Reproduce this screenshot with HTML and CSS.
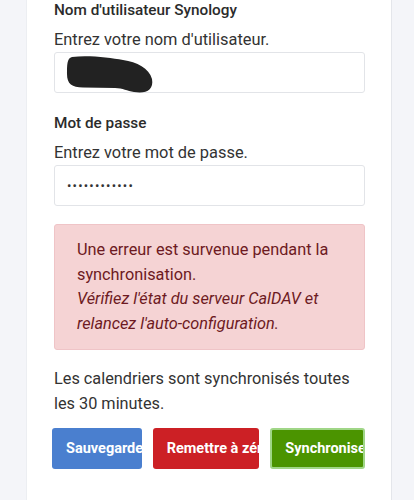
FILE: index.html
```html
<!DOCTYPE html>
<html lang="fr">
<head>
<meta charset="utf-8">
<link rel="stylesheet" href="styles.css">
</head>
<body>
<div class="page">
  <div class="card">
    <div class="field">
      <div class="label">Nom d'utilisateur Synology</div>
      <div class="hint">Entrez votre nom d'utilisateur.</div>
      <div class="input">
        <svg class="scribble" width="100" height="41" viewBox="0 0 100 41">
          <path d="M17 4 C 35 2, 55 5, 68 7 C 82 9, 94 15, 97 26 C 99 37, 91 41, 79 39 C 72 38, 68 35, 60 35 L 28 34.5 C 17 34.5, 12 31, 12 21 C 12 12, 12 5, 17 4 Z" fill="#222"/>
        </svg>
      </div>
    </div>
    <div class="field">
      <div class="label">Mot de passe</div>
      <div class="hint">Entrez votre mot de passe.</div>
      <div class="input"><span class="dots">••••••••••••</span></div>
    </div>
    <div class="alert">
      Une erreur est survenue pendant la synchronisation.<br>
      <em>Vérifiez l'état du serveur CalDAV et relancez l'auto-configuration.</em>
    </div>
    <p class="note">Les calendriers sont synchronisés toutes les 30 minutes.</p>
    <div class="buttons">
      <div class="btn btn-blue">Sauvegarder</div>
      <div class="btn btn-red">Remettre à zéro</div>
      <div class="btn btn-green">Synchroniser</div>
    </div>
  </div>
</div>
</body>
</html>
```
FILE: styles.css
```css
html, body {
  margin: 0;
  padding: 0;
  background: #f4f5f9;
  font-family: Roboto, "Liberation Sans", sans-serif;
  color: #2a2a2a;
}
.page {
  padding: 0 22px 0 26px;
  height: 500px;
  overflow: hidden;
}
.card {
  background: #fff;
  border-left: 1px solid #eceef2;
  border-right: 1px solid #e4e6eb;
  padding: 0 26px 0 27px;
  height: 500px;
  box-sizing: border-box;
}
.field {
  display: flex;
  flex-direction: column;
}
.label {
  font-weight: 500;
  font-size: 15.3px;
  line-height: 20px;
  color: #2b2b2b;
}
.field + .field .label {
  margin-top: 20px;
}
.hint {
  font-size: 16.4px;
  line-height: 22px;
  margin-top: 9px;
  color: #333;
}
.input {
  margin-top: 1px;
  height: 41px;
  border: 1px solid #e2e4e8;
  border-radius: 3px;
  box-sizing: border-box;
  display: flex;
  align-items: center;
  position: relative;
}
.scribble {
  position: absolute;
  left: 0;
  top: 0;
}
.dots {
  padding-left: 12px;
  font-size: 13px;
  letter-spacing: 1.2px;
  color: #333;
}
.alert {
  margin-top: 18px;
  background: #f5d3d4;
  border: 1px solid #efc4c7;
  border-radius: 3px;
  color: #6d1a22;
  font-size: 16.3px;
  line-height: 24.5px;
  padding: 13px 22px 13px 22px;
}
.alert em {
  font-style: italic;
}
.note {
  margin: 17px 0 0 0;
  font-size: 16.3px;
  line-height: 24.5px;
  color: #333;
}
.buttons {
  display: flex;
  gap: 11px;
  margin-top: 12px;
  margin-left: -2px;
}
.btn {
  height: 41px;
  box-sizing: border-box;
  border-radius: 3px;
  color: #fff;
  font-weight: 700;
  font-size: 14.5px;
  display: flex;
  align-items: center;
  white-space: nowrap;
  overflow: hidden;
  padding-left: 14px;
}
.btn-blue {
  width: 90px;
  background: #4a7fcf;
}
.btn-red {
  width: 107px;
  background: #cc2025;
}
.btn-green {
  width: 95px;
  background: #4b9400;
  border: 2px solid #a0d687;
  padding-left: 13px;
}
```
